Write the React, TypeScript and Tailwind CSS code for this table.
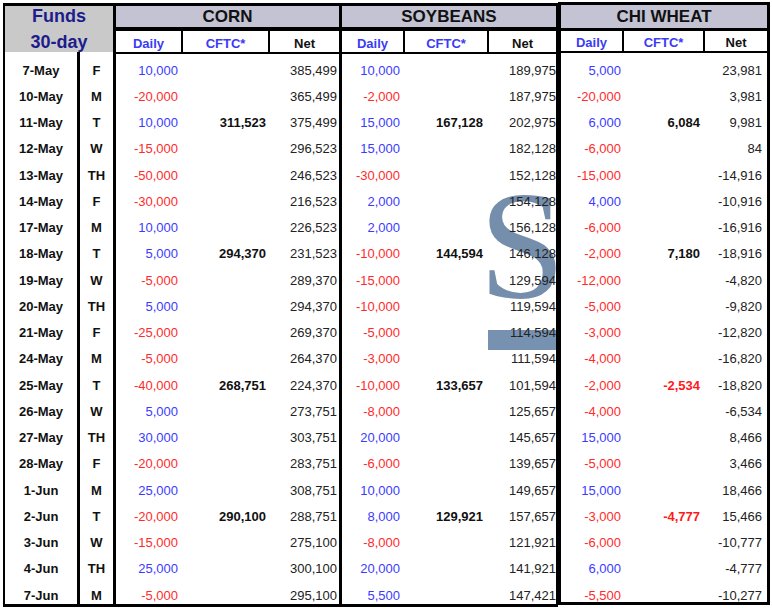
import React from 'react';

type R = [string, string, string[], string[], string[]];

const rows: R[] = [
  ['7-May', 'F', ['10,000', '', '385,499'], ['10,000', '', '189,975'], ['5,000', '', '23,981']],
  ['10-May', 'M', ['-20,000', '', '365,499'], ['-2,000', '', '187,975'], ['-20,000', '', '3,981']],
  ['11-May', 'T', ['10,000', '311,523', '375,499'], ['15,000', '167,128', '202,975'], ['6,000', '6,084', '9,981']],
  ['12-May', 'W', ['-15,000', '', '296,523'], ['15,000', '', '182,128'], ['-6,000', '', '84']],
  ['13-May', 'TH', ['-50,000', '', '246,523'], ['-30,000', '', '152,128'], ['-15,000', '', '-14,916']],
  ['14-May', 'F', ['-30,000', '', '216,523'], ['2,000', '', '154,128'], ['4,000', '', '-10,916']],
  ['17-May', 'M', ['10,000', '', '226,523'], ['2,000', '', '156,128'], ['-6,000', '', '-16,916']],
  ['18-May', 'T', ['5,000', '294,370', '231,523'], ['-10,000', '144,594', '146,128'], ['-2,000', '7,180', '-18,916']],
  ['19-May', 'W', ['-5,000', '', '289,370'], ['-15,000', '', '129,594'], ['-12,000', '', '-4,820']],
  ['20-May', 'TH', ['5,000', '', '294,370'], ['-10,000', '', '119,594'], ['-5,000', '', '-9,820']],
  ['21-May', 'F', ['-25,000', '', '269,370'], ['-5,000', '', '114,594'], ['-3,000', '', '-12,820']],
  ['24-May', 'M', ['-5,000', '', '264,370'], ['-3,000', '', '111,594'], ['-4,000', '', '-16,820']],
  ['25-May', 'T', ['-40,000', '268,751', '224,370'], ['-10,000', '133,657', '101,594'], ['-2,000', '-2,534', '-18,820']],
  ['26-May', 'W', ['5,000', '', '273,751'], ['-8,000', '', '125,657'], ['-4,000', '', '-6,534']],
  ['27-May', 'TH', ['30,000', '', '303,751'], ['20,000', '', '145,657'], ['15,000', '', '8,466']],
  ['28-May', 'F', ['-20,000', '', '283,751'], ['-6,000', '', '139,657'], ['-5,000', '', '3,466']],
  ['1-Jun', 'M', ['25,000', '', '308,751'], ['10,000', '', '149,657'], ['15,000', '', '18,466']],
  ['2-Jun', 'T', ['-20,000', '290,100', '288,751'], ['8,000', '129,921', '157,657'], ['-3,000', '-4,777', '15,466']],
  ['3-Jun', 'W', ['-15,000', '', '275,100'], ['-8,000', '', '121,921'], ['-6,000', '', '-10,777']],
  ['4-Jun', 'TH', ['25,000', '', '300,100'], ['20,000', '', '141,921'], ['6,000', '', '-4,777']],
  ['7-Jun', 'M', ['-5,000', '', '295,100'], ['5,500', '', '147,421'], ['-5,500', '', '-10,277']],
];

const dailyCls = (v: string) => (v.startsWith('-') ? 'text-[#ff2b2b]' : 'text-[#3b3bff]');
const cftcCls = (v: string) => (v.startsWith('-') ? 'text-[#ff1a1a] font-bold' : 'text-[#111111] font-bold');

function Body({ data, widths, cls }: { data: string[][]; widths: string[]; cls: string }) {
  return (
    <div className={`flex flex-col overflow-hidden ${cls}`}>
      {data.map((d, i) => (
        <div key={i} className="flex h-[26.25px] shrink-0 items-center text-[13px] leading-[15px]">
          <div className={`${widths[0]} text-right ${dailyCls(d[0])}`}>{d[0]}</div>
          <div className={`${widths[1]} text-right ${cftcCls(d[1])}`}>{d[1]}</div>
          <div className={`${widths[2]} text-right text-[#222222]`}>{d[2]}</div>
        </div>
      ))}
    </div>
  );
}

function Sub({ widths, h }: { widths: string[]; h: string }) {
  const base = 'flex items-end justify-center pb-[1px] text-[13px] font-bold leading-[15px]';
  return (
    <div className={`flex ${h} border-b-[2px] border-black`}>
      <div className={`${widths[0]} border-r-[2px] border-black ${base} text-[#3b3bf5]`}>Daily</div>
      <div className={`${widths[1]} border-r-[2px] border-black ${base} text-[#3b3bf5]`}>CFTC*</div>
      <div className={`${widths[2]} ${base} text-[#111111]`}>Net</div>
    </div>
  );
}

export default function App() {
  return (
    <div className="relative h-[611px] w-[772px] overflow-hidden bg-white font-['Liberation_Sans',Arial,sans-serif]">
      {/* watermark */}
      <div className="absolute left-[479px] top-[168px] z-0 font-['Liberation_Serif','Times_New_Roman',serif] text-[155px] leading-none text-[#6d88a8] opacity-95">
        S
      </div>
      <div className="absolute left-[488px] top-[330px] z-0 h-[20px] w-[69px] bg-[#7792b0]" />

      <div className="relative z-10 flex items-start pl-[3px]">
        {/* left box: funds, corn, soybeans */}
        <div className="mt-[3px] flex h-[604px] w-[555px] border-t-[3px] border-b-[3px] border-l-[2px] border-r-[2px] border-black">
          {/* Funds */}
          <div className="flex w-[111px] flex-col border-r-[3px] border-black">
            <div className="flex h-[46px] flex-col items-center bg-[#c9c9c9] text-[18px] font-bold leading-[20px] text-[#1c1c8c]">
              <div>Funds</div>
              <div className="mt-[6px]">30-day</div>
            </div>
            <div className="flex h-[552px]">
              <div className="flex w-[75px] flex-col overflow-hidden border-r-[3px] border-black pt-[5px]">
                {rows.map((r) => (
                  <div key={r[0]} className="flex h-[26.25px] shrink-0 items-center justify-center text-[13px] font-bold leading-[15px] text-[#111111]">
                    {r[0]}
                  </div>
                ))}
              </div>
              <div className="flex w-[33px] flex-col overflow-hidden pt-[5px]">
                {rows.map((r) => (
                  <div key={r[0]} className="flex h-[26.25px] shrink-0 items-center justify-center text-[13px] font-bold leading-[15px] text-[#111111]">
                    {r[1]}
                  </div>
                ))}
              </div>
            </div>
          </div>

          {/* Corn */}
          <div className="flex w-[226px] flex-col border-r-[3px] border-black">
            <div className="flex h-[25px] items-center justify-center border-b-[4px] border-black bg-[#c3c3d3] text-[17px] font-bold leading-[20px] text-[#111111]">
              CORN
            </div>
            <Sub widths={['w-[67px]', 'w-[87px]', 'w-[69px]']} h="h-[23px]" />
            <Body
              data={rows.map((r) => r[2])}
              widths={['w-[67px] pr-[5px]', 'w-[87px] pr-[4px]', 'w-[69px] pr-[2px]']}
              cls="h-[550px] pt-[3px]"
            />
          </div>

          {/* Soybeans */}
          <div className="flex w-[214px] flex-col">
            <div className="flex h-[25px] items-center justify-center border-b-[4px] border-black bg-[#c3c3d3] text-[17px] font-bold leading-[20px] text-[#111111]">
              SOYBEANS
            </div>
            <Sub widths={['w-[63px]', 'w-[84px]', 'w-[67px]']} h="h-[23px]" />
            <Body
              data={rows.map((r) => r[3])}
              widths={['w-[63px] pr-[5px]', 'w-[84px] pr-[6px]', 'w-[67px] pr-0']}
              cls="h-[550px] pt-[3px]"
            />
          </div>
        </div>

        {/* Chi wheat box */}
        <div className="mt-[2px] flex h-[603px] w-[212px] flex-col border-[3px] border-black">
          <div className="flex h-[26px] items-center justify-center border-b-[3px] border-black bg-[#c3c3d3] text-[17px] font-bold leading-[20px] text-[#111111]">
            CHI WHEAT
          </div>
          <Sub widths={['w-[63px]', 'w-[81px]', 'w-[62px]']} h="h-[22px]" />
          <Body
            data={rows.map((r) => r[4])}
            widths={['w-[63px] pr-[3px]', 'w-[81px] pr-[5px]', 'w-[62px] pr-[5px]']}
            cls="h-[549px] pt-[4px]"
          />
        </div>
      </div>
    </div>
  );
}
